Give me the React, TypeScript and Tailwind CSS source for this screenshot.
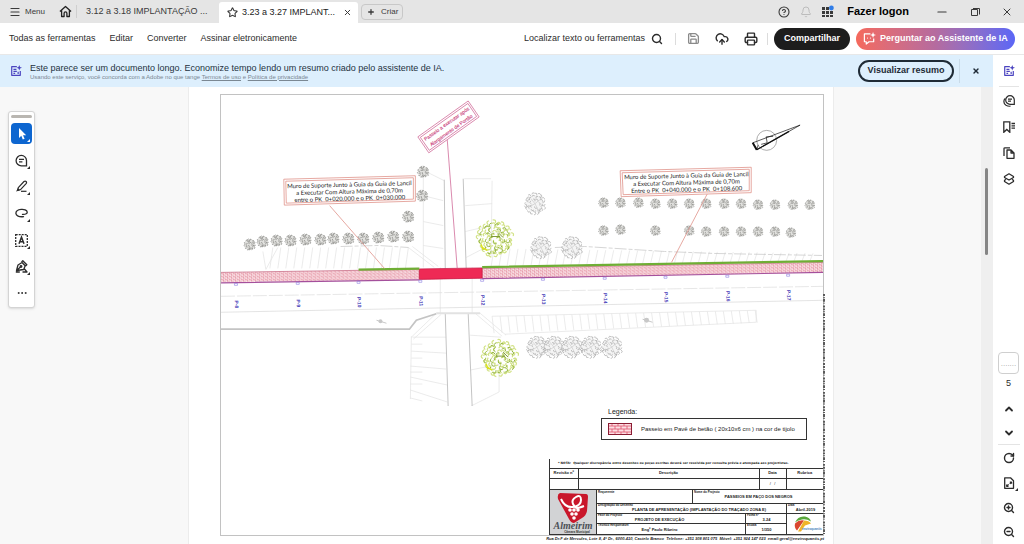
import type { ReactNode } from 'react'
import {
  Bell,
  ChevronDown,
  ChevronUp,
  CircleHelp,
  CloudUpload,
  Ellipsis,
  Menu,
  Minus,
  Plus,
  Printer,
  RotateCw,
  Save,
  Search,
  Star,
  X,
  ZoomIn,
  ZoomOut,
} from 'lucide-react'

const MENU_ITEMS = ['Todas as ferramentas', 'Editar', 'Converter', 'Assinar eletronicamente']

// tree positions on the plan: x, y
const SMALL_TREES_LEFT = [
  [249, 244], [262, 241], [276, 240], [290, 240], [305, 239], [320, 239], [333, 238], [348, 238],
  [363, 238], [378, 237], [393, 236], [408, 236], [408, 216], [422, 195], [423, 171],
]
const SMALL_TREES_RIGHT = [
  [604, 202], [621, 202], [639, 202], [656, 203], [673, 203], [690, 203], [707, 203], [725, 203],
  [742, 203], [759, 204], [776, 204], [794, 204], [811, 204],
  [604, 230], [621, 229], [656, 230], [690, 230], [707, 231], [725, 231], [742, 231], [759, 231],
  [776, 231], [792, 232],
]
const BIG_TREES = [
  [535, 203], [541, 247], [572, 247], [537, 347], [554, 347], [572, 347], [591, 347], [612, 347],
]

const STAKES = [
  { x: 235, label: 'P-8' },
  { x: 297, label: 'P-9' },
  { x: 358, label: 'P-10' },
  { x: 420, label: 'P-11' },
  { x: 482, label: 'P-12' },
  { x: 543, label: 'P-13' },
  { x: 605, label: 'P-14' },
  { x: 666, label: 'P-15' },
  { x: 728, label: 'P-16' },
  { x: 789, label: 'P-17' },
]

function noise(n: number) {
  const v = Math.sin(n * 127.1 + 3.7) * 43758.5453
  return v - Math.floor(v)
}

// leaf clumps on rings, each one a small arc that bulges outwards
function foliage(rings: number[], perRing: number[], size: number) {
  let d = ''
  rings.forEach((r, ring) => {
    const n = perRing[ring]
    for (let i = 0; i < n; i++) {
      const seed = ring * 31 + i
      const a = ((i + noise(seed) * 0.5) / n) * Math.PI * 2
      const rr = r * (0.9 + noise(seed + 0.4) * 0.2)
      const turn = a + (noise(seed + 0.8) - 0.5) * 2.4
      const x = Math.cos(a) * rr
      const y = Math.sin(a) * rr
      const ux = Math.cos(turn) * size
      const uy = Math.sin(turn) * size
      d += `M${(x - uy).toFixed(2)} ${(y + ux).toFixed(2)}Q${(x + ux * 1.6).toFixed(2)} ${(y + uy * 1.6).toFixed(2)} ${(x + uy).toFixed(2)} ${(y - ux).toFixed(2)}`
    }
  })
  return d
}

const SMALL_LEAVES = foliage([1.5, 3.3, 5], [4, 8, 13], 1)
const BIG_LEAVES = foliage([4, 7, 9.5], [6, 13, 20], 1.5)
const GREEN_DARK = foliage([4, 9, 14], [5, 9, 13], 2.2)
const GREEN_LIGHT = foliage([3, 7, 11, 14, 16.5], [5, 10, 15, 17, 22], 2)

function hatch(x1: number, x2: number, step: number, top: (x: number) => number, bottom: (x: number) => number, lean: number) {
  let d = ''
  for (let x = x1; x <= x2; x += step) d += `M${x} ${top(x)}L${x - lean} ${bottom(x)}`
  return d
}

function AssistantIcon({ className }: { className?: string }) {
  return (
    <svg viewBox="0 0 14 14" fill="none" stroke="currentColor" strokeWidth="1.4" className={className}>
      <path d="M8 2H2v10h10V7" strokeLinejoin="round" />
      <path d="M4 5.2h3.5M4 7.5h4M4 9.7h2M9.5 8v2.5" />
      <path d="M10.8 0l.9 2.3 2.3.9-2.3.9-.9 2.3-.9-2.3L7.6 3.2l2.3-.9z" fill="currentColor" stroke="none" />
    </svg>
  )
}

function ToolButton({ label, active, corner = true, children }: { label: string; active?: boolean; corner?: boolean; children: ReactNode }) {
  return (
    <button
      aria-label={label}
      className={
        active
          ? 'relative flex h-[21px] w-[21px] items-center justify-center rounded-sm bg-[#0d66d0] text-white'
          : 'relative flex h-[21px] w-[21px] items-center justify-center rounded-sm text-[#2c2c2c]'
      }
    >
      {children}
      {corner && (
        <svg viewBox="0 0 3 3" className="absolute right-[2px] bottom-[2px] h-[3px] w-[3px]">
          <path d="M3 0v3H0z" fill="currentColor" />
        </svg>
      )}
    </button>
  )
}

function TitleBar() {
  return (
    <header className="flex h-[23px] shrink-0 items-center bg-[#e5e5e5] text-[9px] text-[#3a3a3a]">
      <button className="ml-[9px] flex items-center gap-[4px] text-[8px]">
        <Menu size={12} strokeWidth={2.4} />
        Menu
      </button>
      <button aria-label="Início" className="ml-[14px] border-r border-[#cfcfcf] pr-[4px]">
        <svg viewBox="0 0 14 14" width="13" height="13" fill="none" stroke="#222" strokeWidth="1.4" strokeLinejoin="round">
          <path d="M1 7l6-5.4L13 7M2.8 6v6.4h2.7V9a1.5 1.5 0 013 0v3.4h2.7V6" />
        </svg>
      </button>
      <button className="ml-[9px] w-[133px] text-left whitespace-nowrap">3.12 a 3.18 IMPLANTAÇÃO ...</button>
      <div className="flex h-[21px] w-[139px] items-center self-end rounded-t-[3px] bg-white pl-[8px]">
        <Star size={11} strokeWidth={2.4} />
        <button className="ml-[4px] whitespace-nowrap text-[#222]">3.23 a 3.27 IMPLANT...</button>
        <button aria-label="Fechar guia" className="mr-[6px] ml-auto">
          <X size={9} strokeWidth={2.6} />
        </button>
      </div>
      <button className="ml-[3px] flex h-[16px] w-[42px] items-center gap-[6px] rounded-sm border border-[#c8c8c8] pl-[5px] text-[8px]">
        <Plus size={8} strokeWidth={3.8} />
        Criar
      </button>
      <div className="mr-[11px] ml-auto flex items-center">
        <button aria-label="Ajuda">
          <CircleHelp size={12} strokeWidth={2.2} />
        </button>
        <button aria-label="Notificações" className="ml-[10px] text-[#bcbcbc]">
          <Bell size={12} strokeWidth={2} />
        </button>
        <button aria-label="Aplicativos" className="ml-[9px]">
          <svg viewBox="0 0 13 13" width="13" height="13" fill="#3a3a3a">
            <path d="M1 2h3v3H1zM5 2h3v3H5zM1 6h3v3H1zM5 6h3v3H5zM9 6h3v3H9zM1 10h3v2H1zM5 10h3v2H5zM9 10h3v2H9z" />
            <circle cx="10.4" cy="3" r="2.4" fill="#2f7de8" />
          </svg>
        </button>
        <button className="ml-[13px] text-[11px] font-bold text-black">Fazer logon</button>
        <button aria-label="Minimizar" className="ml-[26px]">
          <Minus size={14} strokeWidth={2} />
        </button>
        <button aria-label="Restaurar" className="ml-[21px]">
          <svg viewBox="0 0 10 10" width="10" height="10" fill="none" stroke="#3a3a3a">
            <path d="M1.5 2.5h6v6h-6zM3 1.5h6.5V7.5" />
          </svg>
        </button>
        <button aria-label="Fechar" className="ml-[21px]">
          <X size={12} strokeWidth={2} />
        </button>
      </div>
    </header>
  )
}

function Toolbar() {
  return (
    <nav className="flex h-[32px] shrink-0 items-center border-b border-[#e8e8e8] bg-white pr-[9px] pl-[9px] text-[9px] text-[#2c2c2c]">
      <div className="flex gap-[14px]">
        {MENU_ITEMS.map((item) => (
          <button key={item} className="whitespace-nowrap">
            {item}
          </button>
        ))}
      </div>
      <div className="ml-auto flex items-center">
        <button className="flex items-center gap-[6px] whitespace-nowrap">
          Localizar texto ou ferramentas
          <Search size={12} strokeWidth={2.8} />
        </button>
        <div className="mr-[11px] ml-[12px] h-[12px] w-px bg-[#dcdcdc]" />
        <button aria-label="Salvar" className="text-[#8a8a8a]">
          <Save size={13} strokeWidth={2.4} />
        </button>
        <button aria-label="Enviar" className="ml-[15px]">
          <CloudUpload size={14} strokeWidth={2.4} />
        </button>
        <button aria-label="Imprimir" className="ml-[15px]">
          <Printer size={14} strokeWidth={2.4} />
        </button>
        <div className="mr-[6px] ml-[9px] h-[12px] w-px bg-[#dcdcdc]" />
        <button className="h-[22px] w-[76px] rounded-full bg-[#1d1d1d] font-bold text-white">Compartilhar</button>
        <button className="ml-[6px] flex h-[22px] w-[159px] items-center gap-[4px] rounded-full bg-gradient-to-r from-[#f5695c] via-[#b56b9f] via-50% to-[#5b66f6] pl-[7px] font-bold whitespace-nowrap text-white">
          <svg viewBox="0 0 14 14" width="13" height="13" fill="none" stroke="currentColor" strokeWidth="1.3">
            <path d="M8 2H1.5v8.5h2V13l3-2.5h5V7M4.5 6.5h.8M7.5 6.5h.8" strokeLinejoin="round" />
            <path d="M10.8 0l.9 2.3 2.3.9-2.3.9-.9 2.3-.9-2.3L7.6 3.2l2.3-.9z" fill="currentColor" stroke="none" />
          </svg>
          Perguntar ao Assistente de IA
        </button>
      </div>
    </nav>
  )
}

function Banner() {
  return (
    <section className="flex h-[32px] shrink-0 items-center bg-[#ddeffd] pl-[10px]">
      <AssistantIcon className="h-[12px] w-[12px] text-[#4b44c0]" />
      <div className="ml-[8px]">
        <p className="text-[9px] leading-[12px] whitespace-nowrap text-[#24323e]">
          Este parece ser um documento longo. Economize tempo lendo um resumo criado pelo assistente de IA.
        </p>
        <p className="text-[6px] leading-[7px] whitespace-nowrap text-[#7b8893]">
          Usando este serviço, você concorda com a Adobe no que tange{' '}
          <a href="#termos" className="underline">Termos de uso</a> e{' '}
          <a href="#privacidade" className="underline">Política de privacidade</a>
        </p>
      </div>
      <button className="ml-auto h-[22px] w-[96px] rounded-full border-2 border-[#1f2b36] text-[9px] font-bold whitespace-nowrap text-[#1f2b36]">
        Visualizar resumo
      </button>
      <div className="ml-[5px] h-[24px] w-px bg-[#c9dbe9]" />
      <button aria-label="Dispensar" className="mr-[13px] ml-[12px] text-[#1f2b36]">
        <X size={8} strokeWidth={4} />
      </button>
    </section>
  )
}

function QuickTools() {
  return (
    <aside className="mt-[24px] ml-[8px] w-[27px] rounded-[3px] border border-[#d4d4d4] bg-white px-[2px] pt-[3px] pb-[3px] shadow-sm">
      <div className="mb-[5px] h-[3px] rounded-full bg-[#b9b6b1]" />
      <div className="flex h-[181px] flex-col justify-between">
        <ToolButton label="Selecionar" active>
          <svg viewBox="0 0 12 12" className="h-[12px] w-[12px]">
            <path d="M3 0v10l2.3-2.2L6.8 11.5l1.8-.8L7 7.2h3.2z" fill="currentColor" />
          </svg>
        </ToolButton>
        <ToolButton label="Comentar">
          <svg viewBox="0 0 13 13" className="h-[13px] w-[13px]" fill="none" stroke="currentColor" strokeWidth="1.3">
            <path d="M11.5 6.5V11.8H6.3A5.2 5.2 0 1111.5 6.5zM4 5.3h5M4 7.8h3.4" />
          </svg>
        </ToolButton>
        <ToolButton label="Realçar">
          <svg viewBox="0 0 13 13" className="h-[13px] w-[13px]" fill="none" stroke="currentColor" strokeWidth="1.2">
            <path d="M3.3 7.6L9 1.5q1.2-.9 2.1 0t0 2.1L5.5 9.6l-3 .6z" strokeLinejoin="round" />
            <path d="M3.2 8L1 11.5l3.8-.9z" fill="currentColor" stroke="none" />
            <path d="M6 11.3h5.5" />
          </svg>
        </ToolButton>
        <ToolButton label="Desenhar">
          <svg viewBox="0 0 13 13" className="h-[13px] w-[13px]" fill="none" stroke="currentColor" strokeWidth="1.3" strokeLinecap="round">
            <path d="M7.5 7.4C11 7.6 12.4 6.4 12.2 5 12 3 9 2.1 6.2 2.4 3 2.7.8 4.3.9 6.400S4 10.300 8.500 9.600" />
          </svg>
        </ToolButton>
        <ToolButton label="Caixa de texto">
          <svg viewBox="0 0 13 13" className="h-[13px] w-[13px]" fill="none" stroke="currentColor">
            <path d="M.7.7h11.6v11.6H.7z" strokeWidth="1.3" strokeDasharray="2 1" />
            <path d="M4 9.8L6.5 3.2 9 9.8M4.8 7.8h3.4" strokeWidth="1.5" />
          </svg>
        </ToolButton>
        <ToolButton label="Assinar">
          <svg viewBox="0 0 13 13" className="h-[13px] w-[13px]" fill="none" stroke="currentColor" strokeWidth="1.3" strokeLinejoin="round">
            <path d="M1.5 10.5L3 5 7 2.5l3.2 3.3-1.5 3.7zM6.5 2l1.3-1.2 4 4-1.3 1.2M1.5 10.5L5.5 7M.8 12h4M9.5 9l2.5 3H7.5" />
            <circle cx="6" cy="6.5" r=".8" />
          </svg>
        </ToolButton>
        <ToolButton label="Mais ferramentas" corner={false}>
          <Ellipsis size={12} />
        </ToolButton>
      </div>
    </aside>
  )
}

function PlanDrawing() {
  return (
    <svg viewBox="220 94 604 312" className="block w-full" role="img" aria-label="Planta de apresentação">
      <defs>
        <pattern id="pave" width="4" height="3" patternUnits="userSpaceOnUse">
          <rect width="4" height="3" fill="#fbe8ec" />
          <path d="M0 .5h2.5M2.5 .5v1.5M2 2h2M.7 2v1" stroke="#dd7388" strokeWidth=".6" fill="none" />
        </pattern>
        <g id="small-tree" fill="none">
          <circle r="5.5" fill="#e2e2df" />
          <path d={SMALL_LEAVES} stroke="#858581" strokeWidth=".7" />
        </g>
        <g id="big-tree" fill="none">
          <circle r="9" fill="#f4f4f4" />
          <path d={BIG_LEAVES} stroke="#a8a8a8" strokeWidth=".7" />
          <path d="M0 0L-4 -5M0 0L5 -4M0 0L3 6M0 0L-5 3" stroke="#c4c4c4" strokeWidth=".6" />
        </g>
        <g id="green-tree" fill="none">
          <path d={GREEN_LIGHT} stroke="#d2e287" strokeWidth="1.2" />
          <path d={GREEN_DARK} stroke="#93b440" strokeWidth="1" />
          <path d="M-4 -2h9M3 -6l5 5" stroke="#7d9a35" />
          <path d="M-13 9l5 3M-14 6l2 5" stroke="#dde31c" strokeWidth="1.5" />
        </g>
      </defs>

      {/* slopes */}
      <g fill="none" stroke="#e2e2e2" strokeWidth=".7">
        <path d={hatch(272, 408, 8, () => 247, () => 268, 3)} />
        <path d="M262 251l3 18 12-22M408 247l26 20M412 246l26 20" />
        <path d={hatch(494, 820, 8, (x) => 248 + (x - 494) * 0.015, (x) => 266 - (x - 494) * 0.018, 3)} />
        <path d={hatch(492, 757, 8, (x) => 316 - (x - 492) * 0.022, (x) => 333 - (x - 492) * 0.04, -2)} />
        <path d="M492 316L757 310V322L505 334" />
        <path d="M492 180l-1 76M423 165v102M444 180l-20-10M423 195l20 5M423 221l20 4M423 245l20 3M464 178h27M465 205l27-2M465 231l26-6M466 257l25-13" />
        <path d="M440 267v46M472 267v46M436 313l-25 24M441 314l-28 25M475 313l27 23M480 313l26 22" />
        <path d="M411 336l-1 63M412 337h34M411 344h11M411 351l35 2M411 358h11M410 366l36 3M410 372h12M410 377l37 8M410 384h12M410 390l37 12M410 398l12 3" />
        <path d="M470 335l31 2M470 370l30-6M471 406l28-14v-27" />
      </g>
      <path d="M340 246l38-1 30 2M555 247l30-1 80 5 50 2 108 2" fill="none" stroke="#c4c4c4" strokeWidth=".7" strokeDasharray="12 2 4 2" />
      <path d="M444 179l1 89M463 178l3 90M445 313l3 97M468 313l4 93" fill="none" stroke="#c4c4c4" />

      {/* road */}
      <path d="M220 296L824 286" fill="none" stroke="#dcdcdc" strokeWidth=".7" strokeDasharray="14 2" />
      <path d="M220 312L824 300" fill="none" stroke="#d8d8d8" strokeWidth=".7" />
      <path d="M220 329H409L416 320L436 313.5" fill="none" stroke="#c4c4c4" strokeWidth="1.8" />
      <path d="M436 313h44" fill="none" stroke="#e2e2e2" strokeWidth="2" />
      <circle cx="380" cy="321" r="2" fill="#c8c8c8" />
      <path d="M376 320l10 3M643 319l10 3" stroke="#c8c8c8" />
      <circle cx="647" cy="320" r="2.5" fill="#c8c8c8" />

      <path d="M220 272L419 269L482 268L824 262V272L482 278L419 279L220 282z" fill="url(#pave)" />
      <path d="M220 272L419 269M482 268L824 262" stroke="#c2607c" strokeWidth=".7" />
      <path d="M220 282.5L419 279.5M482 278.2L824 272" stroke="#a4509c" strokeWidth="1.1" />
      <path d="M419 268.5L482 267.5V277.8L419 279z" fill="#ee2a55" stroke="#c41440" strokeWidth=".7" />
      <path d="M358 269.3L419 268.3M482 266.7L824 260.7" stroke="#6fae35" strokeWidth="2.2" />

      {SMALL_TREES_LEFT.map(([x, y]) => (
        <use key={`${x}-${y}`} href="#small-tree" x={x} y={y} />
      ))}
      {SMALL_TREES_RIGHT.map(([x, y]) => (
        <use key={`${x}-${y}`} href="#small-tree" transform={`translate(${x} ${y}) scale(.87)`} />
      ))}
      {BIG_TREES.map(([x, y]) => (
        <use key={`${x}-${y}`} href="#big-tree" x={x} y={y} />
      ))}
      <use href="#green-tree" x="495" y="238" />
      <use href="#green-tree" x="500" y="358" />

      {STAKES.map(({ x, label }) => {
        const y = 304 - (x - 235) * 0.0165
        return (
          <g key={label}>
            <path d={`M${x - 1.5} ${y - 21}h3v2h-3z`} fill="none" stroke="#8d7fe0" strokeWidth=".6" />
            <text
              transform={`translate(${x - 1} ${y}) rotate(88)`}
              textAnchor="middle"
              fontSize="5"
              fontWeight="bold"
              fontFamily="Liberation Sans, sans-serif"
              fill="#473db8"
            >
              {label}
            </text>
          </g>
        )
      })}

      {/* callouts */}
      <g fill="none" stroke="#e0938a" strokeWidth=".8">
        <path d="M329 205L384 268M708 193L672 262" />
        <path d="M283 178.5L415 175V200.5L283.5 204.5z" fill="#fff" />
        <path d="M285 180.5L413 177V198.5L285.5 202.5z" />
        <path d="M620.5 170L752 166.5V192L621.5 196z" fill="#fff" />
        <path d="M622.5 172L750 168.5V190L623.5 194z" />
      </g>
      <g stroke="#c9578a" strokeWidth=".7" fill="none">
        <path d="M447 139L457 268" />
        <path d="M468 100L479 116L428.5 152L417.5 136z" fill="#fff" />
        <path d="M467.7 102.5L476.5 115.5L429 149.5L420 136.5z" />
      </g>
      <g fontFamily="Lato, sans-serif" fontSize="6" fill="#222" textAnchor="middle">
        <g transform="translate(349 190) rotate(-1.5)">
          <text y="-4">Muro de Suporte Junto à Guia da Guia de Lancil</text>
          <text y="3">a Executar Com Altura Máxima de 0,70m</text>
          <text y="10">entre o PK&#160; 0+020.000 e o PK&#160; 0+030.000</text>
        </g>
        <g transform="translate(687 181) rotate(-1.5)">
          <text y="-4">Muro de Suporte Junto à Guia da Guia de Lancil</text>
          <text y="3">a Executar Com Altura Máxima de 0,70m</text>
          <text y="10">Entre o PK&#160; 0+040.000 e o PK&#160; 0+108.600</text>
        </g>
      </g>
      <g transform="translate(448.5 126) rotate(-35.5)" fontFamily="Liberation Sans, sans-serif" fontSize="5" fill="#c93a78" stroke="#c93a78" strokeWidth=".1" textAnchor="middle">
        <text y="-2">Passeio a executar após</text>
        <text y="6">Alargamento de Portão</text>
      </g>

      {/* north arrow */}
      <g fill="none" stroke="#111">
        <circle cx="767.5" cy="139.5" r="10" stroke="#888" strokeWidth=".7" />
        <path d="M753.5 142L801 124.2L757.5 149z" strokeWidth=".7" />
        <path d="M753.5 142L757.5 149" strokeWidth="2" />
        <path d="M757.5 149L790 130.5" strokeWidth="1.2" />
        <path d="M762 143.5l6-1.5-1-6 7-.5M757.5 149l1.5-5" strokeWidth=".7" />
      </g>
    </svg>
  )
}

function TitleBlock() {
  return (
    <section className="ml-auto w-[274px] border-l border-[#333] text-[4px] leading-[6px] text-[#222]">
      <p className="h-[9px] pl-[8px] font-['DejaVu_Sans',sans-serif] text-[3px] leading-[9px] font-bold whitespace-nowrap">
        * NOTA:&#160; Qualquer discrepância entre desenhos ou peças escritas deverá ser resolvida por consulta prévia e atempada aos projectistas.
      </p>
      <table className="w-full table-fixed border-collapse text-center">
        <thead>
          <tr className="h-[10px]">
            <th className="w-[28px] border-y border-r border-[#333] p-0 font-bold whitespace-nowrap">Revisão nº</th>
            <th className="border border-[#333] p-0 font-bold">Descrição</th>
            <th className="w-[27px] border border-[#333] p-0 font-bold">Data</th>
            <th className="w-[37px] border-y border-l border-[#333] p-0 font-bold">Rubrica</th>
          </tr>
        </thead>
        <tbody>
          <tr className="h-[11px]">
            <td className="border-r border-[#333] p-0" />
            <td className="border-r border-[#333] p-0" />
            <td className="border-r border-[#333] p-0">/&#160;&#160; /</td>
            <td className="p-0" />
          </tr>
        </tbody>
      </table>
      <div className="flex h-[46px] border-y border-[#333]">
        <div className="w-[47px] border-r border-[#333] bg-[#d2d3d5]">
          <svg viewBox="0 0 46 44" className="h-full w-full">
            <path d="M10 3L36 4Q38 4 38 7L37 21Q36 26 32 28L24 33Q21 33 19 29L8 9Q7 4 10 3z" fill="#c9172b" />
            <path d="M11 9q4 9 12 8t8-7-5-3-3 7 4 4 7-2" fill="none" stroke="#fff" strokeWidth="2" />
            <g fill="#fff">
              <circle cx="20" cy="20" r="1.8" />
              <circle cx="24" cy="20" r="1.8" />
              <circle cx="28" cy="20" r="1.8" />
              <circle cx="22" cy="24" r="1.8" />
              <circle cx="26" cy="24" r="1.8" />
              <circle cx="24" cy="28" r="1.8" />
            </g>
            <text x="23" y="39" textAnchor="middle" fontFamily="Liberation Serif, serif" fontStyle="italic" fontWeight="bold" fontSize="10" fill="#4c5055">Almeirim</text>
            <text x="27" y="43" textAnchor="middle" fontFamily="Liberation Sans, sans-serif" fontWeight="bold" fontSize="3" fill="#333">Câmara Municipal</text>
          </svg>
        </div>
        <div className="flex flex-1 flex-col font-bold">
          <div className="flex h-[15px] border-b border-[#333]">
            <div className="w-[96px] border-r border-[#333] pl-px text-[3px] leading-[4px]">Requerente</div>
            <div className="flex-1 pl-px text-center leading-[6px]">
              <div className="text-left text-[3px] leading-[4px]">Nome do Projecto</div>
              PASSEIOS EM PAÇO DOS NEGROS
            </div>
          </div>
          <div className="flex flex-1">
            <div className="flex flex-1 flex-col">
              <div className="h-[10px] border-b border-[#333] pl-px text-center whitespace-nowrap">
                <div className="text-left text-[3px] leading-[3px]">Designação do Desenho</div>
                <div className="pl-[14px]">PLANTA DE APRESENTAÇÃO (IMPLANTAÇÃO DO TRAÇADO ZONA E)</div>
              </div>
              <div className="grid flex-1 grid-cols-[149px_1fr] grid-rows-2 text-center">
                <div className="border-r border-b border-[#333] pr-[24px] pl-px">
                  <div className="text-left text-[3px] leading-[3px]">Fase do Projecto</div>
                  PROJETO DE EXECUÇÃO
                </div>
                <div className="border-b border-[#333] pl-px">
                  <div className="text-left text-[3px] leading-[3px]">Folha nº</div>
                  3.24
                </div>
                <div className="border-r border-[#333] pr-[24px] pl-px">
                  <div className="text-left text-[3px] leading-[3px]">Técnico Responsável</div>
                  Engº Paulo Ribeiro
                </div>
                <div className="pl-px">
                  <div className="text-left text-[3px] leading-[3px]">Escala</div>
                  1/350
                </div>
              </div>
            </div>
            <div className="flex w-[37px] flex-col border-l border-[#333] text-center">
              <div className="h-[10px] border-b border-[#333] pl-px">
                <div className="text-left text-[3px] leading-[3px]">Data</div>
                Abril-2019
              </div>
              <svg viewBox="0 0 36 19" className="w-full flex-1">
                <path d="M8 8q3-7 10-6q5 1 6 5q-5-3-9-2q-5 1-7 3z" fill="#5aa83c" />
                <path d="M8 9q4-4 9-3l-7 10q-3-3-2-7z" fill="#d9472f" />
                <path d="M17 6q5 0 7 3l-6 2-4 6h-3z" fill="#f0b428" />
                <text x="15" y="15" fontSize="3" fontWeight="bold" fontFamily="Liberation Sans, sans-serif" fill="#3f7fb8">enviroquantis</text>
              </svg>
            </div>
          </div>
        </div>
      </div>
    </section>
  )
}

function DocumentPage() {
  return (
    <article className="h-full min-w-0 flex-1 overflow-hidden border-x border-[#ececec] bg-white pt-[7px] pr-[9px] pl-[31px]">
      <div className="relative border border-[#c2c2c2]">
        <PlanDrawing />
        <section className="mr-[16px] ml-auto w-[206px] text-[7px] leading-[12px] text-[#222]">
          <h2 className="pl-[7px]">Legenda:</h2>
          <div className="flex h-[22px] items-center gap-[9px] border border-[#333] pl-[6px] text-[6px] whitespace-nowrap">
            <svg viewBox="0 0 24 12" className="h-[12px] w-[24px] shrink-0">
              <rect x=".5" y=".5" width="23" height="11" fill="#fbdde2" stroke="#8a1c33" />
              <path d="M1 3h22M1 6h22M1 9h22M4 1v2M10 1v2M16 1v2M7 3v3M13 3v3M19 3v3M4 6v3M10 6v3M16 6v3M7 9v2M13 9v2M19 9v2" stroke="#e0536d" strokeWidth=".8" />
            </svg>
            Passeio em Pavê de betão ( 20x10x6 cm ) na cor de tijolo
          </div>
        </section>
        <div className="h-[19px]" />
        <TitleBlock />
        {/* margin note running down the sheet edge */}
        <svg viewBox="0 0 2 250" preserveAspectRatio="none" className="absolute top-[199px] right-[-2px] h-[240px] w-[2px]">
          <path d="M1 0v250" stroke="#5a5a5a" strokeWidth="2" strokeDasharray="2 1 1 1 3 1 1 2 2 1" />
        </svg>
      </div>
      <p className="text-right text-[4px] leading-[6px] font-bold whitespace-nowrap text-[#222] italic">
        Rua Dr.F de Mercules, Lote 8, 4º Dr., 6000-410, Castelo Branco&#160; Telefone: +351 308 801 075&#160; Móvel: +351 924 147 023&#160; email:geral@enviroquantis.pt
      </p>
    </article>
  )
}

function SideRail() {
  return (
    <aside className="flex w-[31px] shrink-0 flex-col items-center bg-white text-[#2c2c2c]">
      <button aria-label="Assistente de IA" className="mt-[10px] text-[#4b44c0]">
        <AssistantIcon className="h-[12px] w-[12px]" />
      </button>
      <div className="mt-[9px] h-px w-[20px] bg-[#e4e4e4]" />
      <div className="mt-[8px] flex flex-col items-center gap-[14px]">
        <button aria-label="Comentários">
          <svg viewBox="0 0 12 12" width="12" height="12" fill="none" stroke="currentColor" strokeWidth="1.2">
            <path d="M11.3 5V9.3H7A4.3 4.3 0 1111.3 5zM5 4.2h4M5 6.2h3M1.800 3.500Q-.5 8 3 10.300 5 11.500 7.500 11.200" />
          </svg>
        </button>
        <button aria-label="Marcadores">
          <svg viewBox="0 0 12 12" width="12" height="12" fill="none" stroke="currentColor" strokeWidth="1.3">
            <path d="M.8.8h6v10.5L3.8 8.5l-3 2.8zM8.5 2.5H12M8.5 4.8H12M8.5 7.1H12" />
          </svg>
        </button>
        <button aria-label="Páginas">
          <svg viewBox="0 0 12 12" width="12" height="12" fill="none" stroke="currentColor" strokeWidth="1.3" strokeLinejoin="round">
            <path d="M4 3h4l3 3v5.3H4zM8 3v3h3M1 9V1.5Q1 .8 2 .8h5" />
          </svg>
        </button>
        <button aria-label="Camadas">
          <svg viewBox="0 0 12 12" width="12" height="12" fill="none" stroke="currentColor" strokeWidth="1.3" strokeLinejoin="round">
            <path d="M6 .8L10.5 3.5V4.5L6 7 1.5 4.5V3.5zM2.8 6.2L1.5 7.5v1L6 11.2l4.5-2.7v-1L9.2 6.2" />
          </svg>
        </button>
      </div>
      <div className="mt-auto flex flex-col items-center">
        <label className="flex flex-col items-center text-[9px] leading-[18px]">
          <input
            aria-label="Página atual"
            defaultValue="......."
            className="h-[22px] w-[21px] rounded-sm border border-[#cfcfcf] bg-white text-center text-[8px] text-[#a8a8a8]"
          />
          5
        </label>
        <button aria-label="Página anterior" className="mt-[11px]">
          <ChevronUp size={12} strokeWidth={3.6} />
        </button>
        <button aria-label="Próxima página" className="mt-[12px]">
          <ChevronDown size={12} strokeWidth={3.6} />
        </button>
        <div className="mt-[5px] h-px w-[22px] bg-[#e4e4e4]" />
        <button aria-label="Girar" className="mt-[7px]">
          <RotateCw size={12} strokeWidth={2.8} />
        </button>
        <button aria-label="Ajustar página" className="relative mt-[13px]">
          <svg viewBox="0 0 12 12" width="12" height="12" fill="none" stroke="currentColor" strokeWidth="1.3">
            <path d="M1.7.8h5.8l3 3v7.5H1.7zM3.8 9.2l1.8-1.8M3.7 7.5v1.8h1.8M8.4 5.3L6.8 6.9M6.8 5.2h1.7v1.6" strokeLinejoin="round" />
          </svg>
          <svg viewBox="0 0 3 3" className="absolute right-[-3px] bottom-[-2px] h-[3px] w-[3px]">
            <path d="M3 0v3H0z" fill="currentColor" />
          </svg>
        </button>
        <button aria-label="Mais zoom" className="mt-[13px]">
          <ZoomIn size={12} strokeWidth={2.8} />
        </button>
        <button aria-label="Menos zoom" className="mt-[12px] mb-[6px]">
          <ZoomOut size={12} strokeWidth={2.8} />
        </button>
      </div>
    </aside>
  )
}

export default function App() {
  return (
    <div className="flex h-screen flex-col overflow-hidden bg-white font-['Liberation_Sans',Arial,sans-serif]">
      <TitleBar />
      <Toolbar />
      <div className="flex min-h-0 flex-1">
        <main className="flex min-w-0 flex-1 flex-col">
          <Banner />
          <div className="flex min-h-0 flex-1 items-start bg-[#f8f8f8]">
            <div className="w-[188px] shrink-0">
              <QuickTools />
            </div>
            <DocumentPage />
            <div className="w-[147px] shrink-0" />
            <div className="h-full w-[12px] shrink-0 bg-[#efefef] pt-[81px] pl-[4px]">
              <div className="h-[87px] w-[3px] rounded-full bg-[#858585]" />
            </div>
          </div>
        </main>
        <SideRail />
      </div>
    </div>
  )
}
